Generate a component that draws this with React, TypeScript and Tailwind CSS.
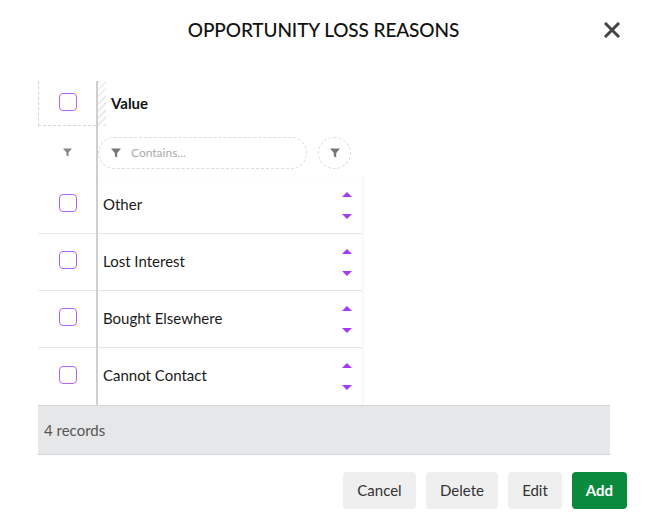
const rows = ['Other', 'Lost Interest', 'Bought Elsewhere', 'Cannot Contact']

function Funnel({ className = '' }: { className?: string }) {
  return (
    <svg viewBox="0 0 10 10" className={className} fill="currentColor">
      <path d="M0 0.5h10L6.2 5v4.5L3.8 8.3V5z" />
    </svg>
  )
}

function Check() {
  return <div className="h-[18px] w-[18px] rounded-[4px] border-[1.5px] border-[#b866f5] bg-white" />
}

function SortArrows() {
  return (
    <div className="flex flex-col items-center gap-[17px] pr-[10px]">
      <svg width="10" height="5" viewBox="0 0 10 5" className="text-[#a43cf2]" fill="currentColor">
        <path d="M0 5L5 0l5 5z" />
      </svg>
      <svg width="10" height="5" viewBox="0 0 10 5" className="text-[#a43cf2]" fill="currentColor">
        <path d="M0 0h10L5 5z" />
      </svg>
    </div>
  )
}

export default function App() {
  return (
    <div className="relative h-[520px] w-[645px] bg-white font-['Lato','Liberation_Sans',sans-serif] text-[#222]">
      <div className="flex h-[60px] items-center justify-center pl-[2px]">
        <h1 className="text-[19px] font-medium tracking-[-0.1px] text-[#111]">OPPORTUNITY LOSS REASONS</h1>
      </div>
      <button className="absolute right-[25px] top-[22px] text-[#444]">
        <svg width="16" height="16" viewBox="0 0 16 16" stroke="currentColor" strokeWidth="3" strokeLinecap="square">
          <path d="M2 2l12 12M14 2L2 14" />
        </svg>
      </button>

      <div className="ml-[38px] mt-[21px] w-[572px]">
        <div className="flex w-[324px]">
          <div className="w-[58px] shrink-0">
            <div className="flex h-[45px] items-center justify-center border-b border-l border-dashed border-[#d4d4d4] pb-[3px] pl-[1px]">
              <Check />
            </div>
            <div className="flex h-[51px] items-center justify-center pt-[2px] text-[#888]">
              <Funnel className="h-[9px] w-[9px]" />
            </div>
            {rows.map((r) => (
              <div key={r} className="flex h-[57px] items-center justify-center border-b border-[#e8e8e8] pb-[4px] pl-[1px] last:border-b-0">
                <Check />
              </div>
            ))}
          </div>
          <div className="w-[2px] shrink-0 bg-[#cfcfcf]" />
          <div className="w-[264px] shrink-0">
            <div className="flex h-[45px] items-center">
              <div className="h-full w-[8px] bg-[repeating-linear-gradient(135deg,#ececec_0px,#ececec_2px,#ffffff_2px,#ffffff_5px)]" />
              <span className="ml-[5px] text-[15px] font-bold text-[#111]">Value</span>
            </div>
            <div className="flex h-[51px] items-center gap-[11px] pt-[2px]">
              <div className="flex h-[32px] w-[209px] items-center rounded-full border border-dashed border-[#dcdcdc] pl-[12px]">
                <Funnel className="h-[10px] w-[10px] text-[#777]" />
                <span className="ml-[10px] text-[12px] text-[#aaa]">Contains...</span>
              </div>
              <div className="flex h-[32px] w-[33px] items-center justify-center rounded-full border border-dashed border-[#dcdcdc]">
                <Funnel className="h-[10px] w-[10px] text-[#777]" />
              </div>
            </div>
            {rows.map((r) => (
              <div
                key={r}
                className="flex h-[57px] items-center justify-between border-b border-[#e8e8e8] pl-[5px] shadow-[2px_0_3px_rgba(0,0,0,0.04)] last:border-b-0"
              >
                <span className="pb-[2px] text-[15px] text-[#1a1a1a]">{r}</span>
                <SortArrows />
              </div>
            ))}
          </div>
        </div>
        <div className="flex h-[50px] items-center border-y border-[#d6d6d6] bg-[#e6e7e8] pl-[6px] text-[15px] text-[#555]">
          4 records
        </div>
      </div>

      <div className="mr-[18px] mt-[17px] flex justify-end gap-[10px] text-[15px]">
        <button className="h-[37px] w-[73px] rounded-[4px] bg-[#efefef] text-[#333]">Cancel</button>
        <button className="h-[37px] w-[72px] rounded-[4px] bg-[#efefef] text-[#333]">Delete</button>
        <button className="h-[37px] w-[54px] rounded-[4px] bg-[#efefef] text-[#333]">Edit</button>
        <button className="h-[37px] w-[55px] rounded-[4px] bg-[#0a8a3c] font-bold text-white">Add</button>
      </div>
    </div>
  )
}
